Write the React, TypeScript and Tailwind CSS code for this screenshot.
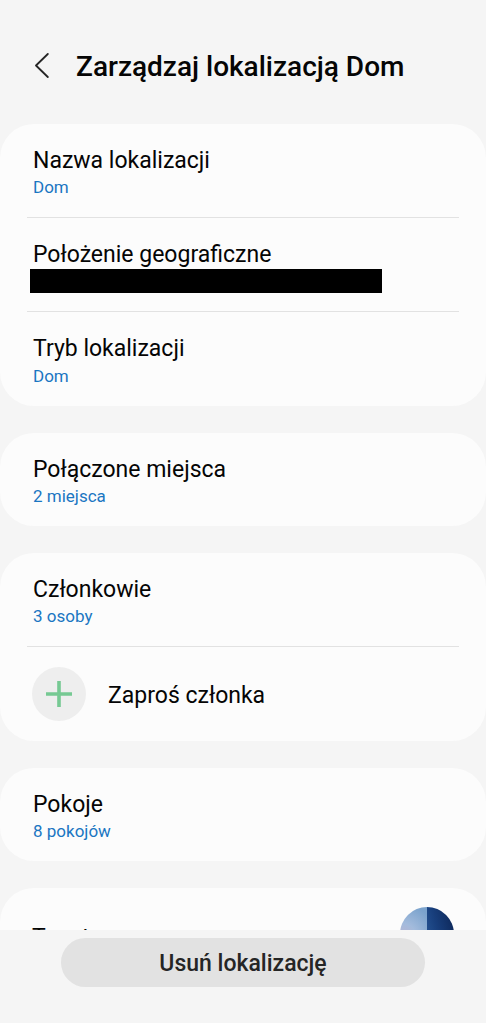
import React from "react";
import clsx from "clsx";

function Card({ children }: { children: React.ReactNode }) {
  return <section className="bg-[#fcfcfc] rounded-[34px]">{children}</section>;
}

function Divider() {
  return <hr className="mx-[27px] h-px border-0 bg-[#e2e2e2]" />;
}

interface RowProps {
  title: string;
  value?: string;
  spaced?: boolean;
  children?: React.ReactNode;
}

function Row({ title, value, spaced, children }: RowProps) {
  return (
    <button
      type="button"
      className={clsx("flex w-full flex-col items-start px-[33px] pt-[23px] pb-[18px] text-left", spaced && "gap-px")}
    >
      <span className="text-[23px] leading-7">{title}</span>
      {value && <span className="text-[17px] leading-6 text-[#1a76c2]">{value}</span>}
      {children}
    </button>
  );
}

export default function App() {
  return (
    <div className="flex h-screen flex-col bg-[#f5f5f5] font-['Roboto',sans-serif] text-[#050505]">
      <header className="flex h-31 shrink-0 items-center px-8 pt-2.5">
        <button type="button" aria-label="Wstecz" className="flex h-11 w-11 items-center">
          <svg width="20" height="28" viewBox="0 0 20 28" fill="none" stroke="#252525" strokeWidth="1.8" strokeLinecap="round" strokeLinejoin="round">
            <path d="M15.8 1 4 12.5 15.8 24" />
          </svg>
        </button>
        <h1 className="text-[28px] leading-9 font-medium">Zarządzaj lokalizacją Dom</h1>
      </header>

      <main className="flex min-h-0 flex-1 flex-col gap-[27px] overflow-y-auto [scrollbar-width:none]">
        <Card>
          <Row title="Nazwa lokalizacji" value="Dom" />
          <Divider />
          <Row title="Położenie geograficzne">
            {/* address is blacked out */}
            <span className="-ml-[3px] h-6 w-[352px] max-w-full bg-black" />
          </Row>
          <Divider />
          <Row title="Tryb lokalizacji" value="Dom" spaced />
        </Card>

        <Card>
          <Row title="Połączone miejsca" value="2 miejsca" />
        </Card>

        <Card>
          <Row title="Członkowie" value="3 osoby" />
          <Divider />
          <button type="button" className="flex w-full items-center gap-[22px] px-8 py-5 text-left">
            <span className="flex h-[54px] w-[54px] items-center justify-center rounded-full bg-[#eeeeee]">
              <svg width="26" height="26" viewBox="0 0 26 26" stroke="#76c993" strokeWidth="3.6">
                <path d="M13 0v26M0 13h26" />
              </svg>
            </span>
            <span className="pt-1 text-[23px] leading-7">Zaproś członka</span>
          </button>
        </Card>

        <Card>
          <Row title="Pokoje" value="8 pokojów" />
        </Card>

        <Card>
          <button type="button" className="flex w-full items-center justify-between px-8 pt-[19px] pb-5 text-left">
            <span className="pt-2 text-[23px] leading-7">Tapeta</span>
            <span className="flex h-[54px] w-[54px] overflow-hidden rounded-full">
              <span className="flex-1 bg-[radial-gradient(circle_at_10%_55%,#b9b4d2_0%,#a3bbdc_35%,#7ba3cd_85%)]" />
              <span className="flex-1 bg-[linear-gradient(75deg,#2a5b9b_0%,#183f7d_45%,#0c2454_100%)]" />
            </span>
          </button>
        </Card>
      </main>

      <footer className="flex h-[93px] shrink-0 items-start justify-center px-[61px] pt-2">
        <button type="button" className="h-[49px] w-full rounded-full bg-[#e2e2e2] pt-1 text-[23px] font-medium text-[#252525]">
          Usuń lokalizację
        </button>
      </footer>
    </div>
  );
}
